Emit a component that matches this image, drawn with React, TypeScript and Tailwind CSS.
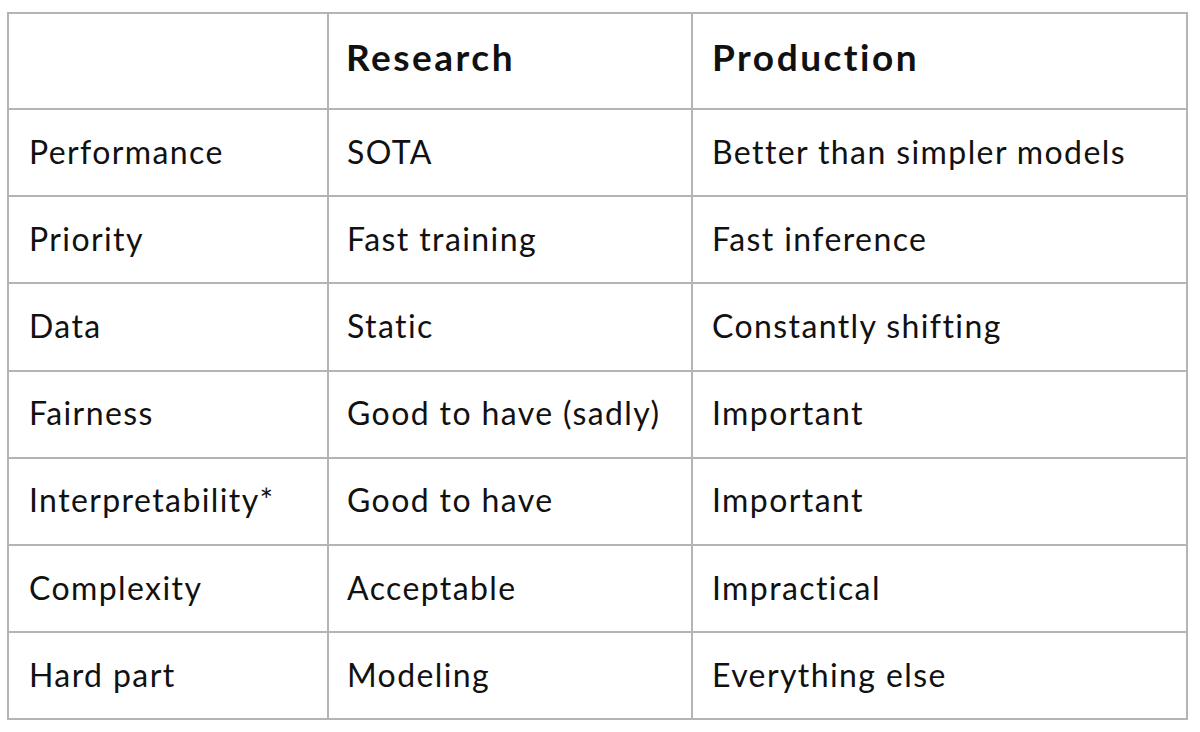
import React from 'react'

const rows: [string, string, string][] = [
  ['Performance', 'SOTA', 'Better than simpler models'],
  ['Priority', 'Fast training', 'Fast inference'],
  ['Data', 'Static', 'Constantly shifting'],
  ['Fairness', 'Good to have (sadly)', 'Important'],
  ['Interpretability*', 'Good to have', 'Important'],
  ['Complexity', 'Acceptable', 'Impractical'],
  ['Hard part', 'Modeling', 'Everything else'],
]

export default function App() {
  return (
    <div
      className="w-[1200px] h-[732px] bg-white pt-[12px] pl-[7px] text-[#111] [font-variant-ligatures:none]"
      style={{ fontFamily: 'Lato, "Noto Sans", sans-serif' }}
    >
      <table className="table-fixed border-collapse w-[1179px]">
        <colgroup>
          <col className="w-[320px]" />
          <col className="w-[364px]" />
          <col className="w-[495px]" />
        </colgroup>
        <thead>
          <tr className="h-[96px]">
            <th className="border-2 border-[#b4b4b4]" />
            <th className="border-2 border-[#b4b4b4] text-left align-middle pl-[17px] pb-[8px] text-[37px] font-bold tracking-[2.5px]">
              Research
            </th>
            <th className="border-2 border-[#b4b4b4] text-left align-middle pl-[19px] pb-[8px] text-[37px] font-bold tracking-[2.5px]">
              Production
            </th>
          </tr>
        </thead>
        <tbody>
          {rows.map((row) => (
            <tr key={row[0]} className="h-[87.2px] text-[32px] tracking-[1.4px]">
              <td className="border-2 border-[#b4b4b4] pl-[20px] pb-[2px]">{row[0]}</td>
              <td className="border-2 border-[#b4b4b4] pl-[18px] pb-[2px]">{row[1]}</td>
              <td className="border-2 border-[#b4b4b4] pl-[19px] pb-[2px]">{row[2]}</td>
            </tr>
          ))}
        </tbody>
      </table>
    </div>
  )
}
